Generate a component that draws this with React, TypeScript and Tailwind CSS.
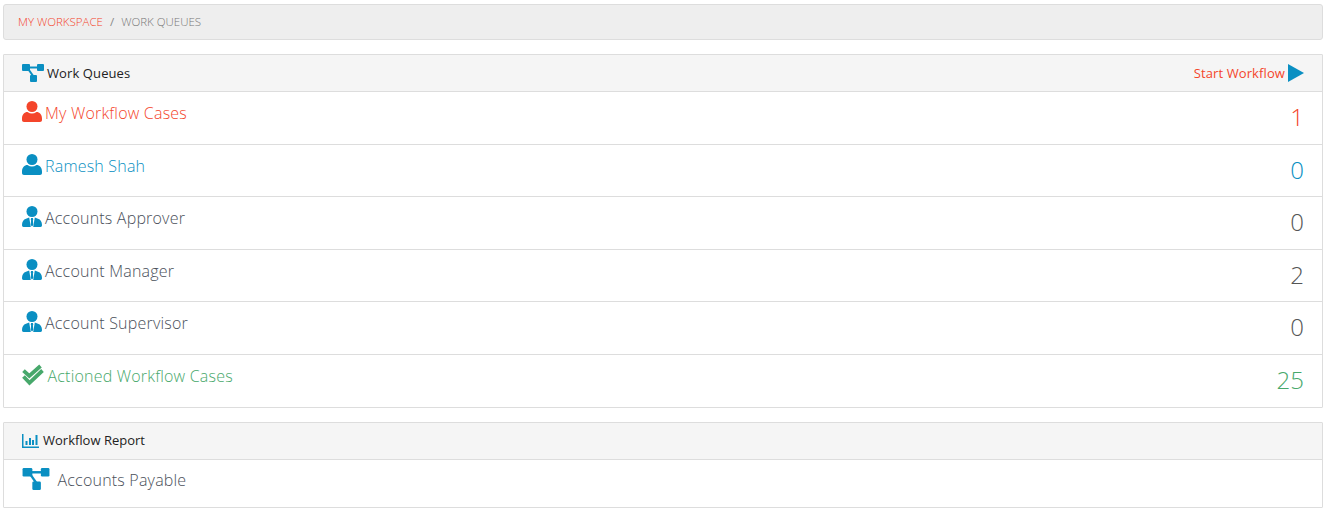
const Flow = ({ className }: { className: string }) => (
  <svg viewBox="0 0 22 18" className={className} fill="#0a8fc2">
    <rect x="0" y="0" width="8" height="7" rx="1" />
    <rect x="15" y="0" width="7" height="7" rx="1" />
    <rect x="8" y="11" width="7" height="7" rx="1" />
    <path d="M7 2.500h9v2H7z" />
    <path d="M5 5l1.500-1.200 6 8.500-1.700 1z" />
  </svg>
);

const Person = ({ color }: { color: string }) => (
  <svg viewBox="0 0 20 21" className="w-5 h-[21px] shrink-0 -ml-[0.500px]" fill={color}>
    <circle cx="10" cy="5.500" r="5.500" />
    <path d="M0 17.500c0-4 2.500-6.500 5.500-6.500 1.500 1 3 1.500 4.500 1.500s3-.5 4.500-1.500c3 0 5.500 2.500 5.500 6.500v1.500c0 1.200-.8 2-2 2H2c-1.200 0-2-.8-2-2z" />
  </svg>
);

const Suit = () => (
  <svg viewBox="0 0 20 21" className="w-5 h-[21px] shrink-0 -ml-[0.500px]">
    <circle cx="10" cy="5.500" r="5.500" fill="#0a8fc2" />
    <path fill="#0a8fc2" d="M0 19c0-3.500 1.500-5.500 4-6.300l3.200-1.200L8.800 21H1.500C.5 21 0 20.200 0 19zM20 19c0-3.500-1.500-5.500-4-6.300l-3.200-1.200L11.200 21h7.300c1 0 1.500-.8 1.500-2z" />
    <path fill="#0a8fc2" d="M9.100 12h1.800l.4 1.500-.4 1 .4 4.500-1.300 1.500-1.300-1.500.4-4.500-.4-1z" />
  </svg>
);

const Check = () => (
  <svg viewBox="0 0 22 22" className="w-[22px] h-[22px] shrink-0 -ml-[0.500px]" fill="none" stroke="#47a86b" strokeWidth="3.800">
    <path d="M1.500 6.700l5.800 5.300L18.500 2" />
    <path d="M1.500 12.500l6 6.300 13-12.300" />
  </svg>
);

const Bars = () => (
  <svg viewBox="0 0 17 14" className="w-[17px] h-[14px] shrink-0" fill="#0a8fc2">
    <path d="M0 0h1.500v12.500H17V14H0z" />
    <rect x="3.500" y="7" width="2" height="4" />
    <rect x="7" y="4" width="2" height="7" />
    <rect x="10" y="6" width="2" height="5" />
    <rect x="13.500" y="1" width="2" height="10" />
  </svg>
);

const rows = [
  { icon: <Person color="#f4452b" />, label: "My Workflow Cases", n: "1", text: "text-[#f4452b]", num: "text-[#f4452b]", gap: "gap-[3.500px]" },
  { icon: <Person color="#0a8fc2" />, label: "Ramesh Shah", n: "0", text: "text-[#0a8fc2]", num: "text-[#0a8fc2]", gap: "gap-[3.500px]" },
  { icon: <Suit />, label: "Accounts Approver", n: "0", text: "text-[#4a505a]", num: "text-[#555]", gap: "gap-[3.500px]" },
  { icon: <Suit />, label: "Account Manager", n: "2", text: "text-[#4a505a]", num: "text-[#555]", gap: "gap-[3.500px]" },
  { icon: <Suit />, label: "Account Supervisor", n: "0", text: "text-[#4a505a]", num: "text-[#555]", gap: "gap-[3.500px]" },
  { icon: <Check />, label: "Actioned Workflow Cases", n: "25", text: "text-[#47a86b]", num: "text-[#47a86b]", gap: "gap-[4px]" },
];

export default function App() {
  return (
    <div className="bg-white h-[515px] overflow-hidden pt-1 pl-[3px] pr-[6px] font-['Open_Sans',sans-serif]">
      <div className="h-9 bg-[#eeeeee] border border-[#dddddd] rounded-[3px] flex items-center px-[14px] text-[11.500px] gap-[7px]">
        <span className="text-[#f4452b] font-light">MY WORKSPACE</span>
        <span className="text-[#888]">/</span>
        <span className="text-[#777] font-light">WORK QUEUES</span>
      </div>

      <section className="mt-[14px] border border-[#dddddd] rounded-[1px]">
        <header className="h-[37px] bg-[#f5f5f5] border-b border-[#dddddd] flex items-center justify-between px-[18px]">
          <div className="flex items-center gap-[3px]">
            <Flow className="w-[22px] h-[18px] -mt-[1px]" />
            <span className="text-[13px] tracking-[0.1px] pt-[1px] text-[#222]">Work Queues</span>
          </div>
          <div className="flex items-center gap-[3px]">
            <span className="text-[13px] tracking-[0.1px] pt-[1px] text-[#f4452b]">Start Workflow</span>
            <svg viewBox="0 0 16 18" className="w-4 h-[18px] -mt-[1px]" fill="#0a8fc2">
              <path d="M0 0l16 9-16 9z" />
            </svg>
          </div>
        </header>
        {rows.map((r, i) => (
          <div
            key={r.label}
            className={`h-[52.500px] flex justify-between px-[18px] ${i < rows.length - 1 ? "border-b border-[#dddddd]" : ""}`}
          >
            <div className={`flex items-start pt-[9px] ${r.gap}`}>
              {r.icon}
              <span className={`text-[16px] leading-[22px] pt-[1px] tracking-[0.2px] font-light ${r.text}`}>{r.label}</span>
            </div>
            <span className={`text-[24px] leading-[33px] font-light pt-[8px] ${r.num}`}>{r.n}</span>
          </div>
        ))}
      </section>

      <section className="mt-[14px] border border-[#dddddd] rounded-[1px]">
        <header className="h-[37px] bg-[#f5f5f5] border-b border-[#dddddd] flex items-center pl-[18px] gap-1">
          <Bars />
          <span className="text-[13px] text-[#222]">Workflow Report</span>
        </header>
        <div className="h-[47px] flex items-start pl-[18px] pt-[8px] gap-[7.500px]">
          <Flow className="w-7 h-[22px]" />
          <span className="text-[16px] leading-[22px] pt-[1px] tracking-[0.2px] font-light text-[#4a505a]">Accounts Payable</span>
        </div>
      </section>
    </div>
  );
}
